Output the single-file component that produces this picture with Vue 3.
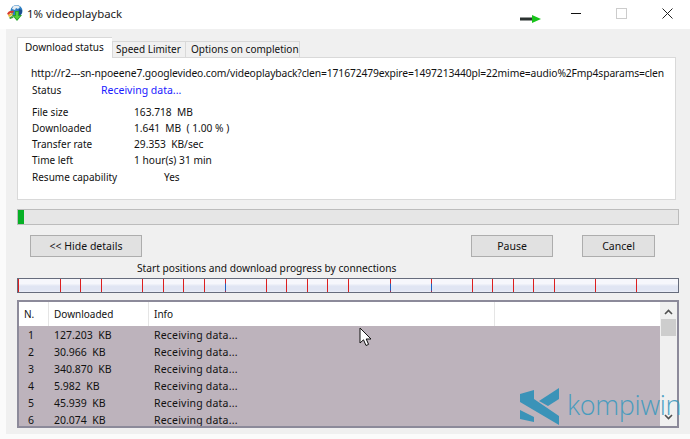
<script setup>
const info = [
  { label: 'File size', value: '163.718  MB' },
  { label: 'Downloaded', value: '1.641  MB  ( 1.00 % )' },
  { label: 'Transfer rate', value: '29.353  KB/sec' },
  { label: 'Time left', value: '1 hour(s) 31 min' },
]
const ticks = [18, 60, 80, 101, 142, 163, 183, 204, 225, 266, 286, 307, 327, 348, 390, 431, 472, 492, 513, 533, 554, 595, 636]
const blue = [225, 390, 431]
const rows = [
  ['1', '127.203  KB'],
  ['2', '30.966  KB'],
  ['3', '340.870  KB'],
  ['4', '5.982  KB'],
  ['5', '45.939  KB'],
  ['6', '20.074  KB'],
]
</script>

<template>
  <div class="win">
    <header class="title">
      <svg class="app" width="18" height="18" viewBox="0 0 18 18">
        <circle cx="10.500" cy="7" r="6" fill="#2d7fc4" />
        <path d="M7 2.500c2-1.500 5-1.500 7 .5l-2 2-2-1-1 2-3-1z" fill="#e9eef2" />
        <path d="M13 5l3 1c.5 3-1 5-3 6l-1-3z" fill="#1d4f8e" />
        <path d="M1 10c1-3 4-4 7-3l-1 2c-2-.5-3 0-4 2z" fill="#d9392a" />
        <path d="M2 12c1-2 3-3 5-2.500l-.5 2c-1.500-.3-2.500.2-3 1.500z" fill="#e8b72e" />
        <path d="M3 14c1-1.500 2-2 4-1.800l.5 1.800c-1 0-2 .3-3 1z" fill="#3f9c35" />
        <path d="M9 7h4v4h3l-5 6-5-6h3z" fill="#25a32b" />
        <path d="M10 8h2v4h2l-3 3.500L8 12h2z" fill="#56cf3c" />
      </svg>
      <span class="name">1% videoplayback</span>
      <div class="caption">
        <svg class="arrow" width="21" height="8" viewBox="0 0 21 8">
          <rect x="0" y="2.500" width="13" height="3" fill="#2b3230" />
          <path d="M12 0l9 4-9 4z" fill="#17c41a" />
        </svg>
        <span class="min"></span>
        <span class="max"></span>
        <svg class="close" width="11" height="11" viewBox="0 0 11 11">
          <path d="M.5.5l10 10M10.500.5l-10 10" stroke="#222" stroke-width="1" fill="none" />
        </svg>
      </div>
    </header>

    <main class="client">
      <nav class="tabs">
        <span class="tab active">Download status</span>
        <span class="tab t2">Speed Limiter</span>
        <span class="tab t3">Options on completion</span>
      </nav>

      <section class="panel">
        <div class="url">http://r2---sn-npoeene7.googlevideo.com/videoplayback?clen=171672479expire=1497213440pl=22mime=audio%2Fmp4sparams=clen</div>
        <div class="status"><span class="lbl">Status</span><span class="recv">Receiving data...</span></div>
        <div class="grid">
          <div v-for="i in info" :key="i.label" class="irow">
            <span class="lbl">{{ i.label }}</span><span class="val">{{ i.value }}</span>
          </div>
        </div>
        <div class="resume"><span class="lbl">Resume capability</span><span class="yes">Yes</span></div>
      </section>

      <div class="progress"><div class="fill"></div></div>

      <div class="buttons">
        <button class="btn hide">&lt;&lt; Hide details</button>
        <button class="btn pause">Pause</button>
        <button class="btn cancel">Cancel</button>
      </div>

      <div class="cap">Start positions and download progress by connections</div>

      <div class="conn">
        <i v-for="t in ticks" :key="t" class="tick" :class="{ blue: blue.includes(t) }" :style="{ left: (t - 18) + 'px' }"></i>
      </div>

      <section class="list">
        <div class="body">
          <div class="head">
            <span class="c1 h">N.</span>
            <span class="c2 h">Downloaded</span>
            <span class="c3 h">Info</span>
            <span class="c4 h"></span>
          </div>
          <div class="rows">
            <div v-for="r in rows" :key="r[0]" class="row">
              <span class="c1 num">{{ r[0] }}</span>
              <span class="c2">{{ r[1] }}</span>
              <span class="c3">Receiving data...</span>
            </div>
          </div>
        </div>
        <aside class="sb">
          <svg width="9" height="6" viewBox="0 0 9 6"><path d="M1 5l3.500-3.500L8 5" stroke="#505050" stroke-width="1.600" fill="none" /></svg>
          <div class="thumb"></div>
          <div class="track"></div>
          <svg width="9" height="6" viewBox="0 0 9 6"><path d="M1 1l3.500 3.500L8 1" stroke="#505050" stroke-width="1.600" fill="none" /></svg>
        </aside>
      </section>
    </main>

    <svg class="cursor" width="14" height="20" viewBox="0 0 14 20">
      <path d="M1 1v15l3.500-3.200L7 18.500l2.600-1.100L7.200 12H12z" fill="#fff" stroke="#111" stroke-width="1" />
    </svg>

    <div class="mark">
      <svg width="42" height="42" viewBox="0 0 42 42">
        <path d="M0 6l14-4v9l25 17v9L0 14z" fill="#3a93b8" />
        <path d="M19 13L39 0v11l-11 7z" fill="#3a93b8" />
        <path d="M0 22l14 7v5L0 31z" fill="#3a93b8" />
      </svg>
      <span class="brand">kompiwin</span>
    </div>
  </div>
</template>

<style>
html, body { margin: 0; background: #fbfbfb; }
</style>

<style scoped>
.win {
  position: relative;
  width: 690px;
  height: 439px;
  overflow: hidden;
  background: #fbfbfb;
  font-family: "Noto Sans", "Open Sans", sans-serif;
  font-size: 10px;
  color: #111;
}
.title {
  height: 29px;
  display: flex;
  align-items: center;
  background: #fff;
  padding-left: 6px;
  box-sizing: border-box;
}
.app { margin-top: -3px; }
.name { margin-left: 3px; margin-top: -2px; font-size: 11.4px; color: #222; }
.caption {
  margin-left: auto;
  width: 170px;
  height: 29px;
  position: relative;
}
.arrow { position: absolute; left: 0; top: 15px; }
.min { position: absolute; left: 51px; top: 13px; width: 10px; height: 1px; background: #111; }
.max { position: absolute; left: 96px; top: 8px; width: 9px; height: 9px; border: 1px solid #ccc; }
.close { position: absolute; left: 142px; top: 8px; }
.client {
  margin-left: 6px;
  height: 405px;
  box-sizing: border-box;
  background: #f0f0f0;
  padding: 8px 11px 0;
}
.tabs {
  display: flex;
  align-items: flex-end;
  height: 21px;
  position: relative;
  z-index: 1;
}
.tab {
  box-sizing: border-box;
  border: 1px solid #d9d9d9;
  border-bottom: 0;
  line-height: 14px;
  white-space: nowrap;
  background: #f0f0f0;
}
.active {
  width: 95px;
  height: 21px;
  background: #fff;
  padding: 2px 0 0 7px;
  border-right: 0;
}
.t2 { width: 73px; height: 16px; padding: 0 0 0 3px; margin-bottom: 1px; border-right: 0; }
.t3 { width: 115px; height: 16px; padding: 0 0 0 5px; margin-bottom: 1px; }
.panel {
  box-sizing: border-box;
  width: 659px;
  height: 143px;
  margin-top: -1px;
  background: #fff;
  border: 1px solid #d9d9d9;
  padding: 7px 14px 0;
}
.url { white-space: nowrap; line-height: 16px; font-size: 10.3px; letter-spacing: -0.115px; margin-left: -1px; }
.status { display: flex; line-height: 16px; margin-top: 1px; }
.status .lbl { width: 69px; }
.recv { color: #1a1aff; font-size: 10.5px; }
.grid { margin-top: 6px; }
.irow { display: flex; line-height: 16px; }
.irow .lbl { width: 102px; }
.val { white-space: pre; font-size: 10.2px; }
.resume { display: flex; line-height: 16px; margin-top: 1px; }
.resume .lbl { width: 132px; }
.progress {
  box-sizing: border-box;
  width: 662px;
  height: 16px;
  margin-top: 9px;
  background: #e6e6e6;
  border: 1px solid #bcbcbc;
}
.fill { width: 6px; height: 14px; background: #06b025; }
.buttons { display: flex; margin: 10px 0 0 13px; }
.btn {
  box-sizing: border-box;
  height: 22px;
  padding: 0;
  background: #e1e1e1;
  border: 1px solid #adadad;
  font: inherit;
  font-size: 10.5px;
  color: #111;
}
.hide { width: 112px; }
.pause { width: 82px; margin-left: 329px; }
.cancel { width: 73px; margin-left: 29px; }
.cap { margin: 3px 0 0 120px; line-height: 16px; height: 17px; white-space: nowrap; font-size: 10.2px; }
.conn {
  position: relative;
  box-sizing: border-box;
  width: 662px;
  height: 15px;
  margin-top: 1px;
  border: 1px solid #666c7c;
  background: linear-gradient(#f6f7fc 0 35%, #e0e5f3 55% 85%, #eceff8);
}
.tick { position: absolute; top: 0; bottom: 0; width: 1px; background: #dc2020; }
.tick.blue { background: linear-gradient(#dc2020 0 30%, #1f5fc0 40% 85%, #dc2020); }
.list {
  box-sizing: border-box;
  display: flex;
  width: 662px;
  height: 128px;
  margin-top: 7px;
  border: 2px solid #8c8a9a;
  background: #fff;
  overflow: hidden;
}
.body { flex: 1; min-width: 0; }
.head { display: flex; height: 24px; align-items: center; background: #fff; }
.h { height: 24px; line-height: 25px; border-right: 1px solid #e5e5e5; box-sizing: border-box; }
.c1 { width: 30px; padding-left: 5px; box-sizing: border-box; }
.c2 { width: 100px; padding-left: 5px; box-sizing: border-box; white-space: pre; }
.c3 { width: 346px; padding-left: 5px; box-sizing: border-box; }
.c4 { flex: 1; border-right: 0; }
.rows { background: #bdb3bc; height: 102px; padding-top: 1px; box-sizing: border-box; font-size: 10.5px; }
.rows .c3 { letter-spacing: 0.2px; }
.row { display: flex; height: 17px; line-height: 17px; }
.num { padding-left: 9px; }
.sb {
  width: 17px;
  flex: none;
  box-sizing: border-box;
  background: #f0f0f0;
  display: flex;
  flex-direction: column;
  align-items: center;
  padding: 7px 0 6px;
}
.thumb { width: 15px; height: 17px; margin-top: 4px; background: #cdcdcd; }
.track { flex: 1; }
.cursor { position: absolute; left: 359px; top: 327px; }
.mark {
  position: absolute;
  left: 520px;
  top: 388px;
  display: flex;
  align-items: flex-start;
}
.brand {
  margin: -3px 0 0 5px;
  font-family: "Open Sans", sans-serif;
  font-weight: 300;
  font-size: 27px;
  line-height: 40px;
  letter-spacing: -0.3px;
  color: #3d9abf;
  opacity: 0.9;
}
</style>
